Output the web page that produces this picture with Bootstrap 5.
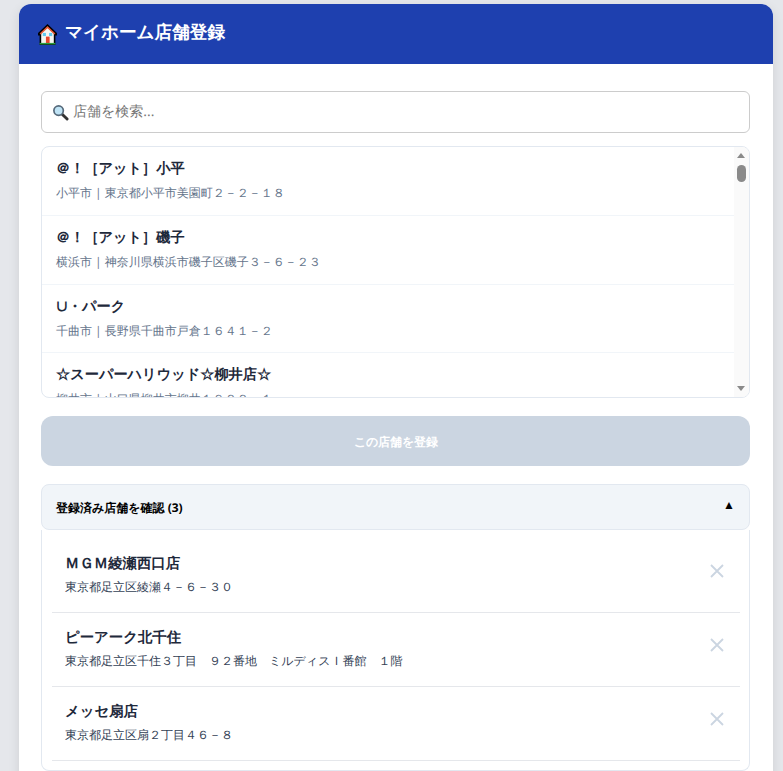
<!DOCTYPE html>
<html><head><meta charset="utf-8"><title>マイホーム店舗登録</title>
<link href="https://cdn.jsdelivr.net/npm/bootstrap@5.3.0/dist/css/bootstrap.min.css" rel="stylesheet">
<style>
html,body{height:771px;overflow:hidden}
body{background:#e5e7eb;font-family:"Open Sans",sans-serif;color:#1f2937;padding:4px 10px 0 19px;text-rendering:geometricPrecision}
.shell{background:#fff;border-radius:12px 12px 0 0;box-shadow:0 4px 12px rgba(0,0,0,.1);height:900px}
.shell-head{background:#1e40af;color:#fff;height:60px;border-radius:12px 12px 0 0;padding:0 19px;font-size:17.600px;font-weight:700;gap:8px}
.head-title{padding-bottom:3px}
.shell-body{padding:27px 23px 0 22px}
.search-box{height:42px;border:1px solid #ccc;border-radius:6px;padding:0 11px 0 10px;gap:4px;margin-bottom:13px}
.search-box input{border:0;outline:0;flex:1;font-size:14px;font-family:inherit;min-width:0;padding:0 0 2px;background:transparent;text-rendering:geometricPrecision}
.search-box input::placeholder{color:#757575}
.shop-list{height:252px;border:1px solid #e2e8f0;border-radius:8px;overflow:hidden;margin-bottom:18px;position:relative}
.shop-row{height:68.800px;padding:11px 14px 0;border-bottom:1px solid #f1f5f9;margin-right:15px}
.shop-name{font-size:14.200px;font-weight:700;color:#1e293b;line-height:21px;margin-bottom:5px}
.shop-sub{font-size:12px;color:#64748b;line-height:18px}
.fake-bar{position:absolute;top:0;right:0;bottom:0;width:15px;background:#fafafa}
.fake-bar i{position:absolute;left:3px;width:0;height:0;border-left:4.500px solid transparent;border-right:4.500px solid transparent}
.arrow-up{top:6px;border-bottom:5px solid #8a8a8a}
.arrow-down{bottom:6px;border-top:5px solid #8a8a8a}
.fake-bar b{position:absolute;top:18px;left:3px;width:9px;height:17px;background:#8a8a8a;border-radius:5px}
.save-btn{height:50px;width:100%;background:#cbd5e1;color:#fff;border:0;border-radius:12px;font-size:12px;font-weight:700;margin-bottom:18px;display:block;padding:1px 0 0}
.fold-head{height:46px;background:#f1f5f9;border:1px solid #e2e8f0;border-radius:8px;padding:1px 14px 0;font-size:12px;font-weight:700;color:#000}
.fold-arrow{font-size:12px;margin:-6px 0 0 1px;line-height:1}
.fold-panel{border:1px solid #e2e8f0;border-top:0;border-radius:0 0 8px 8px;padding:9px 9px 10px 10px;height:241px}
.reg-row{height:74px;border-bottom:1px solid #e5e7eb;padding:14px 13px 0 13px}
.reg-name{font-size:14.400px;font-weight:700;color:#1e293b;line-height:21px;margin-bottom:4px}
.reg-sub{font-size:12px;color:#334155;line-height:18px}
.reg-x{width:16px;height:16px;margin-top:10px;margin-right:2px;flex:none}
</style></head><body>
<div class="shell">
 <div class="shell-head d-flex align-items-center">
  <svg width="19" height="21" viewBox="0 0 18 20" aria-hidden="true"><path d="M9 0 0 8.500V11h1.500v9h15v-9H18V8.500z" fill="#000"/><path d="M9 2.500 3 8v10.500h12V8z" fill="#f5f5f0"/><path d="M9 1.800 1.500 9l1 1L9 4l6.500 6 1-1z" fill="#e5532d"/><rect x="7.500" y="12" width="3.500" height="6.500" fill="#e8452c"/><rect x="4.500" y="8.500" width="3" height="3" fill="#5ec8f0"/><rect x="10.500" y="8.500" width="3" height="3" fill="#5ec8f0"/><rect x="1.500" y="18" width="15" height="1.500" fill="#2f9e41"/></svg>
  <span class="head-title">マイホーム店舗登録</span>
 </div>
 <div class="shell-body">
  <div class="search-box d-flex align-items-center">
   <svg width="17" height="17" viewBox="0 0 18 18" aria-hidden="true"><line x1="10.500" y1="10.500" x2="16" y2="16" stroke="#333" stroke-width="3" stroke-linecap="round"/><circle cx="7" cy="7" r="5" fill="#bfe3f5" stroke="#55697a" stroke-width="1.800"/></svg>
   <input type="text" placeholder="店舗を検索...">
  </div>
  <div class="shop-list">
   <div class="shop-row"><div class="shop-name">＠！［アット］小平</div><div class="shop-sub">小平市 | 東京都小平市美園町２－２－１８</div></div>
   <div class="shop-row"><div class="shop-name">＠！［アット］磯子</div><div class="shop-sub">横浜市 | 神奈川県横浜市磯子区磯子３－６－２３</div></div>
   <div class="shop-row"><div class="shop-name">∪・パーク</div><div class="shop-sub">千曲市 | 長野県千曲市戸倉１６４１－２</div></div>
   <div class="shop-row"><div class="shop-name">☆スーパーハリウッド☆柳井店☆</div><div class="shop-sub">柳井市 | 山口県柳井市柳井１９２２－１</div></div>
   <div class="fake-bar" aria-hidden="true"><i class="arrow-up"></i><b></b><i class="arrow-down"></i></div>
  </div>
  <button class="save-btn" type="button" disabled>この店舗を登録</button>
  <div class="fold-head d-flex justify-content-between align-items-center"><span>登録済み店舗を確認 (3)</span><span class="fold-arrow">▲</span></div>
  <div class="fold-panel">
   <div class="reg-row d-flex justify-content-between"><div><div class="reg-name">ＭＧＭ綾瀬西口店</div><div class="reg-sub">東京都足立区綾瀬４－６－３０</div></div><svg class="reg-x" viewBox="0 0 16 16" aria-hidden="true"><path d="M2 2l12 12M14 2 2 14" stroke="#cbd5e1" stroke-width="1.800"/></svg></div>
   <div class="reg-row d-flex justify-content-between"><div><div class="reg-name">ピーアーク北千住</div><div class="reg-sub">東京都足立区千住３丁目　９２番地　ミルディスＩ番館　１階</div></div><svg class="reg-x" viewBox="0 0 16 16" aria-hidden="true"><path d="M2 2l12 12M14 2 2 14" stroke="#cbd5e1" stroke-width="1.800"/></svg></div>
   <div class="reg-row d-flex justify-content-between"><div><div class="reg-name">メッセ扇店</div><div class="reg-sub">東京都足立区扇２丁目４６－８</div></div><svg class="reg-x" viewBox="0 0 16 16" aria-hidden="true"><path d="M2 2l12 12M14 2 2 14" stroke="#cbd5e1" stroke-width="1.800"/></svg></div>
  </div>
 </div>
</div>
<script src="https://cdn.jsdelivr.net/npm/bootstrap@5.3.0/dist/js/bootstrap.bundle.min.js"></script>
</body></html>
